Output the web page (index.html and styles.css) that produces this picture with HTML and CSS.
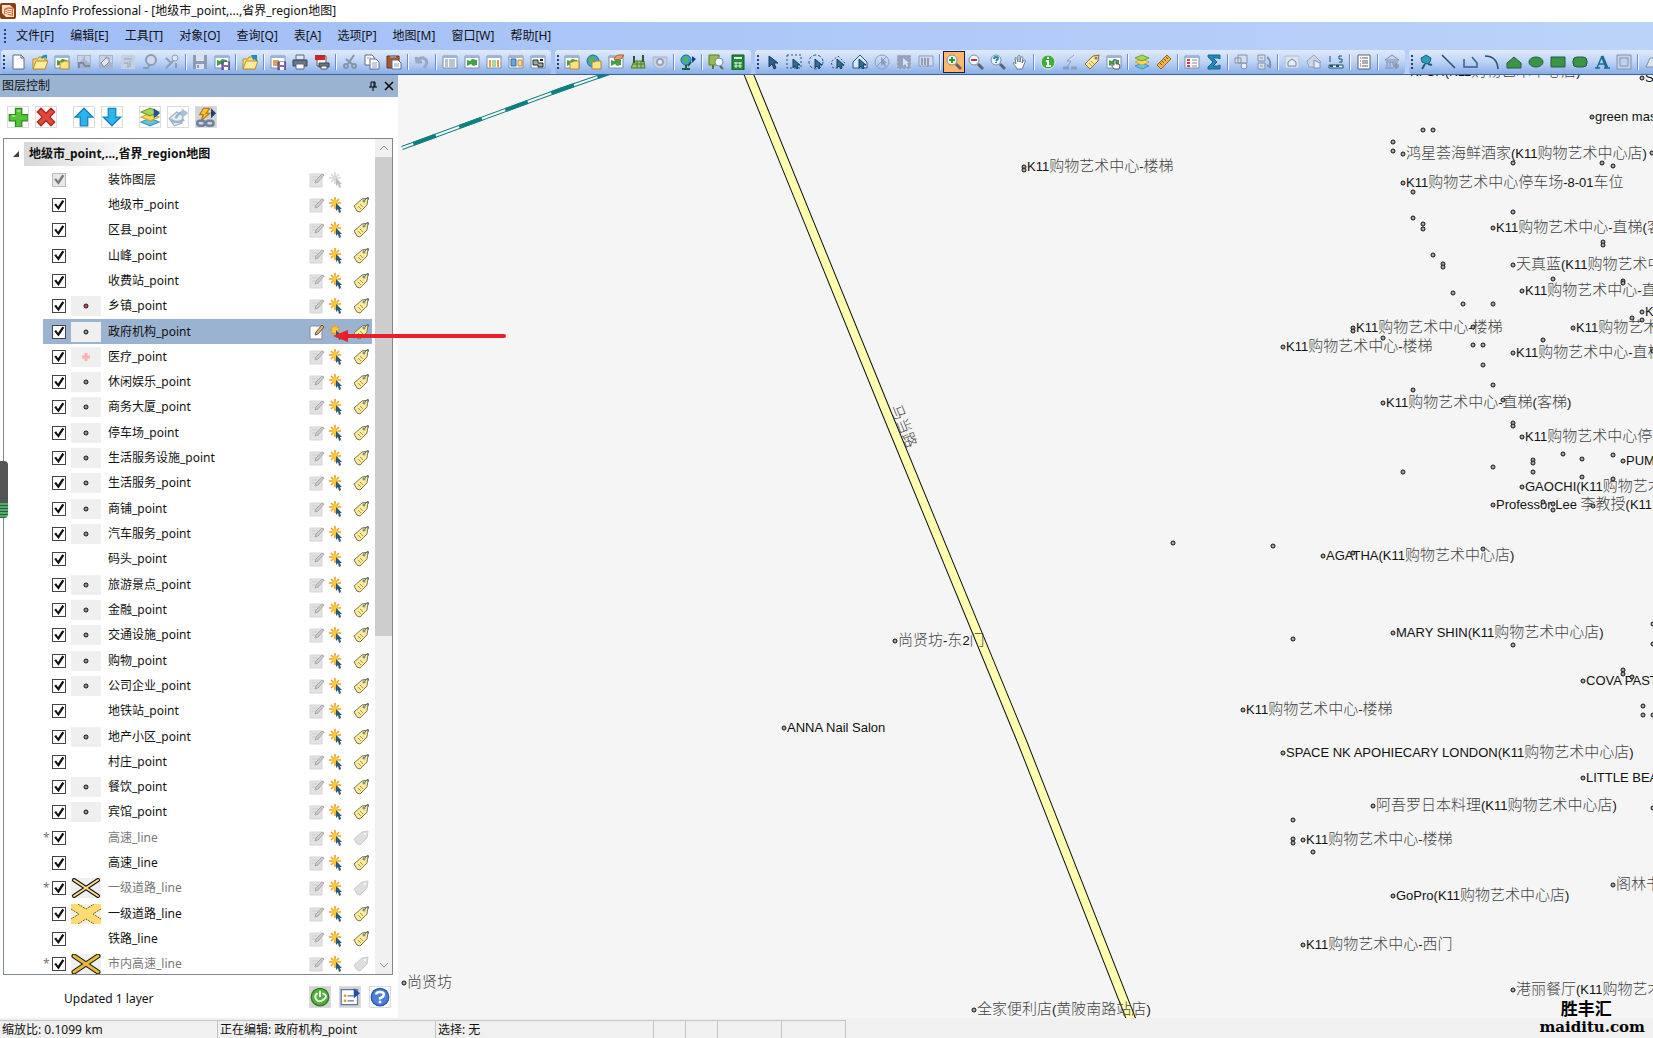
FILE: index.html
```html
<!DOCTYPE html>
<html lang="zh-CN">
<head>
  <meta charset="UTF-8">
  <title>MapInfo Professional</title>
  <link rel="stylesheet" href="styles.css">
</head>
<body>

  <header class="titlebar">
    <svg class="logo" viewBox="0 0 16 16">
      <rect x="0" y="0" width="16" height="16" rx="2" fill="#8a3f12"/>
      <path d="M2 2h8l4 4v8H6l-4-4z" fill="#fbe3cf"/>
      <path d="M4 11V6c3-2 6-2 9-1v8z" fill="#e0702a"/>
      <path d="M5 8q4-3 7-1M5 10q4-3 7-1M5 12q4-3 7-1" stroke="#fff" fill="none"/>
    </svg>
    <span>MapInfo Professional - [地级市_point,...,省界_region地图]</span>
  </header>

  <nav class="menubar">
    <button>文件[F]</button>
    <button>编辑[E]</button>
    <button>工具[T]</button>
    <button>对象[O]</button>
    <button>查询[Q]</button>
    <button>表[A]</button>
    <button>选项[P]</button>
    <button>地图[M]</button>
    <button>窗口[W]</button>
    <button>帮助[H]</button>
  </nav>

  <div class="toolbars" id="toolbars"></div>

  <main class="workspace">
    <section class="panel">
      <div class="panel-header">
        <h2>图层控制</h2>
        <button aria-label="固定"><svg viewBox="0 0 10 10"><path d="M3 1h4v5M3 1v5M1 6h8M5 6v4M6 1v5" stroke="#000" fill="none"/></svg></button>
        <button aria-label="关闭"><svg viewBox="0 0 10 10"><path d="M1 1l8 8M9 1l-8 8" stroke="#000" stroke-width="1.5" fill="none"/></svg></button>
      </div>

      <div class="panel-tools" id="panelTools"></div>

      <div class="tree">
        <div class="tree-body">
          <div class="tree-root">
            <svg viewBox="0 0 8 8"><path d="M7 1v6H1z" fill="#404040"/></svg>
            <strong>地级市_point,...,省界_region地图</strong>
          </div>
          <div class="layers" id="layers"></div>
        </div>
        <div class="scrollbar">
          <svg viewBox="0 0 10 10"><path d="M1 7l4-4 4 4" stroke="#888" fill="none"/></svg>
          <div class="track"><div class="thumb"></div></div>
          <svg viewBox="0 0 10 10"><path d="M1 3l4 4 4-4" stroke="#888" fill="none"/></svg>
        </div>
      </div>

      <div class="panel-footer">
        <span>Updated 1 layer</span>
        <div class="footer-tools" id="footerTools"></div>
      </div>
    </section>

    <section class="map">
      <svg class="map-canvas">
        <g transform="translate(-398 -75)">
          <polyline class="rail" points="402,148 560,90 612,72"/>
          <polyline class="rail-inner" points="402,148 560,90 612,72"/>
          <polyline class="rail-dash" points="402,148 560,90 612,72"/>
          <polyline class="road-edge" points="747,70 885,409 1023,744 1133,1024"/>
          <polyline class="road" points="747,70 885,409 1023,744 1133,1024"/>
          <g id="places"></g>
          <text class="label cjk" text-anchor="middle" transform="translate(899 428) rotate(68)">马当路</text>
        </g>
      </svg>
    </section>

    <svg class="arrow" viewBox="0 0 174 12"><path d="M12 6H171" stroke="#e8202c" stroke-width="4" stroke-linecap="round"/><path d="M0 6L15 0v12z" fill="#e8202c"/></svg>
    <div class="side-handle"></div>
  </main>

  <footer class="statusbar">
    <span class="wide">缩放比: 0.1099 km</span>
    <span class="wide">正在编辑: 政府机构_point</span>
    <span class="wide">选择: 无</span>
    <span></span>
    <span></span>
    <span class="mid"></span>
    <span class="mid"></span>
  </footer>

  <div class="watermark"><b>胜丰汇</b><strong>maiditu.com</strong></div>

  <script>
    // pieces that several icons share
    const folder = '<path d="M1 5h5l1-2h6v3h2l-2 9H1z" fill="#f8dc78" stroke="#b98f28"/><path d="M1 15l3-8h12l-3 8z" fill="#ffeb9c" stroke="#b98f28"/>';
    const miniFolder = '<path d="M6 8h3l1-1h5v8H6z" fill="#ffe182" stroke="#b08a2c"/>';
    const miniDisk = '<path d="M8 8h8v8H8z" fill="#8a6bb0" stroke="#59407c"/><path d="M10 8h4v3h-4zM10 13h4v3h-4z" fill="#fff"/>';
    const frame = '<path d="M1 2h14v12H1z" fill="#fff" stroke="#7c8ea5"/><path d="M1 3h14" stroke="#9cb4d0" stroke-width="2"/>';
    const land = '<path d="M3 6l3 1 2-2 5 1v5l-4 1-2-2-4 2z" fill="#43a047"/>';
    const grayFrame = '<path d="M1 1h14v14H1z" fill="#a7b3ca"/><path d="M2 2h6l-2 4-4 3zM9 2h5v7l-5-3z" fill="#c9d2e3"/>';
    const cursor = '<path d="M5 2v11l3-3 2 5 2-1-2-5h4z" fill="#2d5f8c" stroke="#17405f"/>';
    const smallCursor = '<path d="M7 5v9l2-2 2 3 1-1-1-3h3z" fill="#2d6f96" stroke="#17405f"/>';
    const lens = '<path d="M10 10l5 5" stroke="#5a6470" stroke-width="3"/><circle cx="6" cy="6" r="5" fill="#eef7ff" stroke="#7d8da0"/>';
    const blueFlag = '<path d="M11 1l5 4-5 4z" fill="#1f4fa5"/>';
    const hand = '<path d="M5 15c-1-3-3-4-4-6 1-1 2 0 3 1L3 4c1-1 2 0 2 1l1 3V2c1-1 2-1 2 0v6l1-5c1-1 2 0 2 1l-1 5 2-3c1 0 2 0 1 2l-2 5-1 2z" fill="#fff" stroke="#6c7a8c"/>';
    const layersShape = '<path d="M1 12l7-3 7 3-7 3z" fill="#62c3e8" stroke="#3998c2"/><path d="M1 8l7-3 7 3-7 3z" fill="#ffd75c" stroke="#d9a52a"/><path d="M1 4l7-3 7 3-7 3z" fill="#a6d65a" stroke="#6da52c"/>';
    const star = '<path d="M6 0v12M0 6h12M2 2l8 8M10 2l-8 8" stroke="#e9a01d" stroke-width="1.6"/><circle cx="6" cy="6" r="3" fill="#ffc83a"/>';
    const starCursor = '<path d="M7 6v8l2-2 1 4 2-1-1-3h2z" fill="#2c5877"/>';

    const icons = {
      blank: '<path d="M3 1h8l3 3v11H3z" fill="#fff" stroke="#5d6d86"/><path d="M11 1v3h3" fill="none" stroke="#5d6d86"/>',
      open: folder + '<path d="M9 4q2-4 6-3v4l-2-2-3 2z" fill="#2588c6"/>',
      openMap: frame + land + miniFolder,
      gray1: grayFrame + '<path d="M3 14V9h4l2 3h5" stroke="#7d8aa5" fill="none" stroke-width="2"/>',
      gray2: grayFrame + '<path d="M3 9l5-5h3v4l-5 5z" fill="#e1e6ef" stroke="#7d8aa5"/>',
      gray3: '<path d="M1 1h14v14H1z" fill="#c4cfe0"/><path d="M4 5h8M4 9h4v5M10 7v6" stroke="#94a1ba" fill="none"/>',
      gray4: '<circle cx="9" cy="6" r="5" fill="#cfd9ea" stroke="#8d9bb5" stroke-width="2"/><path d="M1 14h5l2-4" stroke="#8d9bb5" stroke-width="2" fill="none"/>',
      gray5: '<path d="M2 14L9 7M2 4l4 4M12 9v5" stroke="#8d9bb5" stroke-width="2" fill="none"/><circle cx="11" cy="4" r="3" fill="#dde5f2" stroke="#8d9bb5"/>',
      saveGray: '<path d="M1 1h14v14H1z" fill="#8e9bb4"/><path d="M4 1h8v6H4zM4 10h8v5H4z" fill="#dce3ee"/><path d="M6 11v3" stroke="#8e9bb4" stroke-width="2"/>',
      saveMap: frame + land + miniDisk,
      folderFlag: folder + '<path d="M9 1h6v7l-2-3-2 1z" fill="#2588c6"/>',
      savePic: frame + '<path d="M3 6h6v6H3z" fill="#d9a35b"/>' + miniDisk,
      print: '<path d="M4 1h8v5H4z" fill="#dceaf8" stroke="#59697d"/><path d="M1 6h14v6H1z" fill="#667587" stroke="#38444f"/><path d="M4 10h8v5H4z" fill="#fff" stroke="#59697d"/>',
      pdf: '<path d="M3 2h9v10H3z" fill="#fff" stroke="#7f4f4f"/><path d="M1 1h10v5H1z" fill="#c62828"/><path d="M5 9h10v4H5z" fill="#667587" stroke="#38444f"/><path d="M7 12h6v3H7z" fill="#fff" stroke="#555"/>',
      cut: '<path d="M12 1L6 10M4 5l7 6" stroke="#8693ac" stroke-width="2"/><circle cx="4" cy="12" r="2" fill="none" stroke="#8693ac" stroke-width="2"/><circle cx="12" cy="12" r="2" fill="none" stroke="#8693ac" stroke-width="2"/>',
      copy: '<path d="M1 1h7l2 2v8H1z" fill="#fff" stroke="#5d6d86"/><path d="M6 5h6l3 3v7H6z" fill="#fff" stroke="#5d6d86"/><path d="M8 9h5M8 11h5M8 13h5M3 4h4" stroke="#8a9cb5"/>',
      paste: '<path d="M1 2h12v12H1z" fill="#a8572f" stroke="#6d3215"/><path d="M4 1h6v3H4z" fill="#8a8f98"/><path d="M6 6h6l3 3v6H6z" fill="#fff" stroke="#5d6d86"/><path d="M8 10h5M8 12h5" stroke="#8a9cb5"/>',
      undo: '<path d="M2 3l1 5h5M3 7q4-5 8-2t-1 9" stroke="#9aa7bf" stroke-width="3" fill="none"/>',
      table: frame + '<path d="M3 6h3M3 8h3M3 10h3M3 12h3M7 6h6M7 8h6M7 10h6M7 12h6" stroke="#7787a0"/>',
      mapWin: frame + land,
      graphWin: frame + '<path d="M4 6v7M12 6v7" stroke="#e89d34" stroke-width="2"/><path d="M7 6v7M9 6v7" stroke="#58a856"/>',
      layoutWin: frame + '<path d="M3 5h5v7H3z" fill="#61a8e0" stroke="#2e69a8"/><path d="M10 6h4v6h-4z" fill="#ffd9a0" stroke="#cf852b"/>',
      redistrict: frame + '<path d="M3 6h5v3h5v4H8v-2H3z" fill="#9fae9f" stroke="#222"/><path d="M10 6h3" stroke="#222" stroke-width="2"/>',
      wfs: frame + land + miniFolder,
      wms: '<circle cx="7" cy="7" r="6" fill="#3f9fd3" stroke="#256a97"/><path d="M3 4q4-3 6 0l-2 4-4 1zM9 8l3-1-1 4z" fill="#5bb443"/>' + miniFolder,
      tile: frame + land + '<path d="M6 4l4-3h6l-3 4-6 1z" fill="#e8a06b" stroke="#a9602c"/>',
      grid: '<path d="M1 14l3-7h10l1 7zM3 10h12M7 7v7M11 7v7" fill="#9ac46e" stroke="#4c7d2c"/><path d="M4 2v7M13 1v7" stroke="#2d5a2d" stroke-width="2"/>',
      shieldGray: '<path d="M1 3h14v5q0 5-7 7-7-2-7-7z" fill="#c9cfe0" stroke="#aab3c8"/><circle cx="8" cy="8" r="3" fill="#eef" stroke="#98a4bd" stroke-width="2"/>',
      globe: '<circle cx="6" cy="6" r="5" fill="#3aa7c9" stroke="#1e6c8c"/><path d="M3 4l4-1 1 4-4 2z" fill="#5bb443"/><path d="M6 11v4M2 15h8M11 8l-3 4" stroke="#1d5c46" stroke-width="2"/><path d="M12 2l4 3-4 4z" fill="#123f94"/>',
      findMap: '<path d="M1 1h10v10H1z" fill="#95ba51" stroke="#5b7b28"/><path d="M5 11v4" stroke="#5b7b28" stroke-width="2"/><path d="M12 12l3 3" stroke="#5a6470" stroke-width="2"/><circle cx="11" cy="8" r="4" fill="#eef7ff" stroke="#7d8da0"/>',
      calc: '<path d="M2 1h12v15H2z" fill="#238a3b" stroke="#0d5a20"/><path d="M4 4h8" stroke="#dff5df" stroke-width="2"/><path d="M6 8v6M10 8v6M4 9h8M4 12h8" stroke="#dff5df"/>',
      pointer: cursor,
      selRect: '<path d="M1 1h14v13H1z" fill="none" stroke="#2e5380" stroke-dasharray="2 2"/>' + smallCursor,
      selRadius: '<circle cx="8" cy="8" r="7" fill="none" stroke="#2e5380" stroke-dasharray="3 2"/>' + smallCursor,
      selPoly: '<path d="M8 2l7 7-3 5H3L1 8z" fill="none" stroke="#2e5380" stroke-dasharray="2 2"/>' + smallCursor,
      selBound: '<path d="M8 1l7 7v6H1V8z" fill="#d9e8fa" stroke="#2e5380"/>' + smallCursor,
      unselGray: '<circle cx="8" cy="8" r="7" fill="none" stroke="#8f9dbb"/><path d="M7 3v9l2-2 2 3 1-1-1-3h2z" fill="#8f9dbb"/><path d="M3 12L12 3" stroke="#8f9dbb"/>',
      invertGray: '<path d="M1 1h14v14H1z" fill="#95a2bd" stroke="#c7d2e6" stroke-dasharray="2 2"/><path d="M7 4v8l2-2 2 3 1-1-1-3h2z" fill="#dbe4f3"/>',
      graphGray: '<path d="M1 2h14v10H1z" fill="#d2dbea" stroke="#8f9dbb"/><path d="M4 4v7M7 4v7M10 4v9" stroke="#8f9dbb" stroke-width="2"/>',
      zoomIn: lens + '<path d="M6 3v6M3 6h6" stroke="#2c9a2c" stroke-width="2"/>',
      zoomOut: lens + '<path d="M3 6h6" stroke="#c0392b" stroke-width="2"/>',
      zoomAny: lens + '<path d="M4 5q0-2 2-2t2 1-2 3M6 8v1" stroke="#2183a8" stroke-width="2" fill="none"/>',
      hand: hand,
      info: '<circle cx="8" cy="8" r="7" fill="#3fae3f" stroke="#dff1df"/><path d="M8 3v2M6 7h2v5M6 12h5" stroke="#fff" stroke-width="2" fill="none"/>',
      hotlink: '<path d="M1 14h6M9 14h6" stroke="#8f9dbb" stroke-width="3"/><path d="M12 1L5 7h4l-4 6" stroke="#8f9dbb" fill="#dbe4f3"/>',
      label: '<path d="M1 10L9 2l6-1-1 6-8 8z" fill="#f7e7a0" stroke="#8a6d1f"/><circle cx="12" cy="4" r="1" fill="#fff" stroke="#555"/><path d="M5 9l3 3M7 7l3 3" stroke="#b79a45"/>',
      drag: frame + land + '<path d="M8 15c-1-2-3-3-2-4h2V6h2v4l3 0 1 2-1 3z" fill="#fff" stroke="#556"/>',
      layers: layersShape,
      ruler: '<path d="M1 11L11 1l4 4L5 15z" fill="#f1b64a" stroke="#9a6417"/><path d="M4 9l2 2M6 7l2 2M8 5l2 2M10 3l2 2" stroke="#7a4c0c"/>',
      legend: frame + '<path d="M3 6h3M3 9h3M3 12h3" stroke="#cf3f3f" stroke-width="2"/><path d="M8 6h5M8 9h5M8 12h5" stroke="#889"/>',
      sum: '<path d="M2 1h12v4l-2-1H7l4 4-4 4h5l2-1v4H2v-2l5-5-5-5z" fill="#2288b8" stroke="#17658c"/>',
      district1: '<path d="M4 1h9v8H4zM1 4h6v5H1z" fill="#d5deed" stroke="#8290ac"/><circle cx="10" cy="12" r="3" fill="#e6ecf6" stroke="#8290ac"/>',
      district2: '<path d="M2 1h7v6H2zM2 9h7v6H2zM4 4h3M4 12h3" fill="#d5deed" stroke="#8290ac"/><path d="M11 3q4 3 3 10l-3-2" fill="none" stroke="#8290ac" stroke-width="2"/>',
      clip1: '<path d="M1 2h14v12H1z" fill="#dbe3f0" stroke="#b5c0d5"/><path d="M4 12V8l4-3 4 3v4z" fill="#e8eef7" stroke="#7281a0"/>',
      clip2: '<path d="M1 7l7-6 7 7-7 5H3z" fill="#ccd6e7" stroke="#96a3bc"/><path d="M8 6v8h6V9z" fill="#e8eef7" stroke="#8290ac"/>',
      scale: '<path d="M1 11h14v3H1z" fill="#fff" stroke="#174f6d"/><path d="M2 12h3M8 12h3" stroke="#174f6d" stroke-width="2"/><path d="M2 2v6M14 2h-3v3h3v3h-3" stroke="#17506c" fill="none"/>',
      report: '<path d="M2 1h12v14H2z" fill="#fff" stroke="#55606e"/><path d="M6 4h6M6 7h6M6 9h6M6 12h6" stroke="#55606e"/><path d="M4 4h1M4 7h1M4 10h1M4 12h1" stroke="#c33"/>',
      bank: '<path d="M1 6l7-5 7 5z" fill="#c9d3e4" stroke="#7d8ca8"/><path d="M3 8v5M6 8v5M9 8v3M1 14h8M2 8h12" stroke="#7d8ca8"/><path d="M9 12h6M12 9v6" stroke="#8b99b3" stroke-width="3"/>',
      pin: '<path d="M8 1l5 3-1 4-3 2-5-2-1-4 2-1z" fill="#2e9dba" stroke="#155f78"/><path d="M7 10l-3 5M10 10l4 1" stroke="#155f78" stroke-width="2"/>',
      line: '<path d="M2 1l13 13" stroke="#234f73" stroke-width="1.5"/>',
      pline: '<path d="M2 5v8h13V9L10 3" stroke="#31608a" fill="none" stroke-width="1.5"/>',
      arc: '<path d="M1 2q12 0 13 13" stroke="#234f73" fill="none" stroke-width="1.5"/>',
      poly: '<path d="M1 9l7-6 7 6v5H1z" fill="#3d9442" stroke="#1e5a52"/>',
      ellipse: '<ellipse cx="8" cy="8" rx="7" ry="5" fill="#3d9442" stroke="#1e5a52"/>',
      rect: '<path d="M1 3h14v10H1z" fill="#3d9442" stroke="#1e5a52"/>',
      roundRect: '<rect x="1" y="3" width="14" height="10" rx="4" fill="#3d9442" stroke="#1e5a52"/>',
      text: '<path d="M1 14h5M10 14h6M5 10h6" stroke="#196d93" stroke-width="1.5"/><path d="M3 14L8 2" stroke="#196d93" stroke-width="1.5"/><path d="M8 2l5 12" stroke="#196d93" stroke-width="3"/>',
      frameGray: '<path d="M1 1h14v14H1zM4 4h8v8H4z" fill="#c3d2ec" stroke="#8290ac"/>',
      reshape: '<path d="M2 13l4-9h6l3 9z" fill="#dbe4f2" stroke="#8290ac"/>',
      add: '<path d="M6 1h5v5h5v5h-5v5H6v-5H1V6h5z" fill="#55c23a" stroke="#2c8a1c"/><path d="M7 3h3M3 7h3" stroke="#b6efa0"/>',
      remove: '<path d="M4 1l4 4 4-4 3 3-4 4 4 4-3 3-4-4-4 4-3-3 4-4-4-4z" fill="#e3473c" stroke="#a92920"/>',
      up: '<path d="M8 1l7 7h-4v7H5V8H1z" fill="#2bb4ef" stroke="#1580b8"/>',
      down: '<path d="M8 15l7-7h-4V1H5v7H1z" fill="#2bb4ef" stroke="#1580b8"/>',
      layersMenu: layersShape + blueFlag,
      labelMenu: '<path d="M1 9l6-5 5 3-1 6-6 2z" fill="#e6edf4" stroke="#9cb3cc"/><path d="M2 10q5 4 11 0M6 9q4-7 9-4" stroke="#9cb3cc" stroke-width="2" fill="none"/><path d="M11 1l5 4-5 4z" fill="#a9c0dc"/>',
      hotMenu: '<path d="M6 1h5L8 5h3l-7 6 2-5H3z" fill="#ffc531" stroke="#b67b12"/><rect x="1" y="11" width="6" height="4" rx="2" fill="none" stroke="#6d829f" stroke-width="2"/><rect x="8" y="11" width="6" height="4" rx="2" fill="none" stroke="#6d829f" stroke-width="2"/><path d="M12 1l4 4-4 4z" fill="#1f3f75"/>',
      power: '<circle cx="8" cy="8" r="7" fill="#4db437" stroke="#2b7d1c"/><path d="M8 3v5M6 5q-3 2-1 5t6 0-1-5" stroke="#fff" stroke-width="1.5" fill="none"/>',
      options: '<path d="M1 2h13v12H1z" fill="#fff" stroke="#5878a5"/><path d="M3 7h2M3 11h2" stroke="#e0a030" stroke-width="2"/><path d="M6 7h5M6 11h5" stroke="#68788c"/>' + blueFlag,
      help: '<circle cx="8" cy="8" r="7" fill="#4c7fd8" stroke="#2a55a5"/><path d="M5 6q0-2 3-2t3 2-3 3v1M8 11v2" stroke="#fff" stroke-width="2" fill="none"/>',
      edit: '<path d="M1 2h12v13H1z" fill="#fff" stroke="#889"/><path d="M6 11l1-3 6-7 2 2-6 7z" fill="#eeb250" stroke="#555"/>',
      editOff: '<path d="M1 2h12v13H1z" fill="#e2e2e2" stroke="#d4d4d4"/><path d="M3 5h6M3 8h4" stroke="#ccc"/><path d="M6 11l1-3 6-6 2 1-6 7z" fill="#ccc" stroke="#aaa"/>',
      select: star + starCursor,
      selectOff: '<path d="M6 0v12M0 6h12M2 2l8 8M10 2l-8 8" stroke="#d8d8d8" stroke-width="1.6"/><path d="M7 6v8l2-2 1 4 2-1-1-3h2z" fill="#bbb"/>',
      tag: '<path d="M1 9l8-7 6-1-1 7-7 7-3-1z" fill="#f8eb9b" stroke="#84744a"/><circle cx="11" cy="4" r="1" fill="#fff" stroke="#47698a"/><path d="M12 3l3-3 1 3" fill="none" stroke="#47799a"/><path d="M5 9l3 3M7 7l3 3" stroke="#a8944c"/>',
      tagOff: '<path d="M1 9l8-7 6-1-1 7-7 7-3-1z" fill="#dedede" stroke="#ccc"/><circle cx="12" cy="4" r="1" fill="#fff"/>'
    };

    function icon(name) {
      return `<svg class="icon" viewBox="0 0 16 16">${icons[name]}</svg>`;
    }

    function buttons(names) {
      return names.split(' ').map(n => n === '|'
        ? '<i class="sep"></i>'
        : `<button class="tool tool-${n}" aria-label="${n}">${icon(n)}</button>`).join('');
    }

    const bars = [
      'blank open openMap gray1 gray2 gray3 gray4 gray5 | saveGray saveMap | folderFlag | savePic print pdf | cut copy paste | undo | table mapWin graphWin layoutWin redistrict',
      'wfs wms tile grid shieldGray | globe | findMap calc',
      'pointer selRect selRadius selPoly selBound unselGray invertGray graphGray | zoomIn zoomOut zoomAny hand | info hotlink label drag | layers ruler | legend sum | district1 district2 | clip1 clip2 scale | report | bank',
      'pin line pline arc poly ellipse rect roundRect text frameGray | reshape'
    ];
    document.getElementById('toolbars').innerHTML =
      bars.map(b => `<div class="toolbar"><i class="grip"></i>${buttons(b)}</div>`).join('');

    document.getElementById('panelTools').innerHTML =
      ['add remove', 'up down', 'layersMenu labelMenu hotMenu'].map(g => `<div class="group">${buttons(g)}</div>`).join('');
    document.getElementById('footerTools').innerHTML = buttons('power options help');

    // name, symbol, flags: d = disabled, s = selected, * = out of zoom range
    const layers = [
      ['装饰图层', '', 'd'], ['地级市_point'], ['区县_point'], ['山峰_point'], ['收费站_point'],
      ['乡镇_point', 'red'], ['政府机构_point', 'dot', 's'], ['医疗_point', 'cross'],
      ['休闲娱乐_point', 'dot'], ['商务大厦_point', 'dot'], ['停车场_point', 'dot'],
      ['生活服务设施_point', 'dot'], ['生活服务_point', 'dot'], ['商铺_point', 'dot'],
      ['汽车服务_point', 'dot'], ['码头_point'], ['旅游景点_point', 'dot'], ['金融_point', 'dot'],
      ['交通设施_point', 'dot'], ['购物_point', 'dot'], ['公司企业_point', 'dot'], ['地铁站_point'],
      ['地产小区_point', 'dot'], ['村庄_point'], ['餐饮_point', 'dot'], ['宾馆_point', 'dot'],
      ['高速_line', '', '*'], ['高速_line'], ['一级道路_line', 'thin', '*'],
      ['一级道路_line', 'thick'], ['铁路_line'], ['市内高速_line', 'gold', '*']
    ];

    const cross = (w, c) => `<path d="M3 2L27 18M27 2L3 18" stroke="#111" stroke-width="${w + 2}" stroke-linecap="round"/><path d="M3 2L27 18M27 2L3 18" stroke="${c}" stroke-width="${w}" stroke-linecap="round"/>`;
    const symbols = {
      dot: '<circle cx="15" cy="10" r="2" fill="#999" stroke="#111"/>',
      red: '<circle cx="15" cy="10" r="2" fill="#b55" stroke="#311"/>',
      cross: '<path d="M15 6v8M11 10h8" stroke="#ffb0b0" stroke-width="3"/>',
      thin: cross(2, '#ffe08a'),
      thick: '<path d="M0 0h30v20H0z" fill="#ffdc73"/><path d="M7 0l8 5 8-5zM7 20l8-5 8 5zM0 5l8 5-8 5zM30 5l-8 5 8 5z" fill="#f4f0e4"/><path d="M7 0l8 5 8-5M7 20l8-5 8 5M0 5l8 5-8 5M30 5l-8 5 8 5" fill="none" stroke="#6b5a18" stroke-dasharray="2 1"/>',
      gold: cross(3, '#e8b93a')
    };

    document.getElementById('layers').innerHTML = layers.map(([name, symbol, flag], i) => `
      <div class="layer ${flag === 's' ? 'selected' : ''} ${flag === '*' ? 'hidden-zoom' : ''}">
        <span class="mark">${flag === '*' ? '*' : ''}</span>
        <input type="checkbox" id="layer${i}" checked ${flag === 'd' ? 'disabled' : ''}>
        ${symbol ? `<svg class="symbol" viewBox="0 0 30 20">${symbols[symbol]}</svg>` : '<span></span>'}
        <label for="layer${i}">${name}</label>
        ${icon(flag === 's' ? 'edit' : 'editOff')}
        ${icon(flag === 'd' ? 'selectOff' : 'select')}
        ${flag === 'd' ? '' : icon(flag === '*' ? 'tagOff' : 'tag')}
      </div>`).join('');

    // labelled places: x, y, text
    const k11 = 'K11购物艺术中心';
    const places = [
      [1024, 167, k11 + '-楼梯'], [895, 641, '尚贤坊-东2门'], [784, 728, 'ANNA Nail Salon'],
      [404, 983, '尚贤坊'], [974, 1010, '全家便利店(黄陂南路站店)'],
      [1407, 72, `KFSH(${k11}店)`], [1642, 78, 'S'], [1592, 117, 'green massage'],
      [1403, 154, `鸿星荟海鲜酒家(${k11}店)`], [1403, 183, k11 + '停车场-8-01车位'],
      [1493, 228, k11 + '-直梯(客梯)'], [1513, 265, `天真蓝(${k11}店)`], [1522, 291, k11 + '-直梯'],
      [1642, 312, k11], [1353, 328, k11 + '-楼梯'], [1573, 328, k11], [1513, 353, k11 + '-直梯'],
      [1283, 347, k11 + '-楼梯'], [1383, 403, k11 + '-直梯(客梯)'], [1522, 437, k11 + '停车场'],
      [1623, 461, 'PUMA'], [1522, 487, `GAOCHI(${k11}店)`], [1493, 505, `Professor Lee 李教授(${k11}店)`],
      [1323, 556, `AGATHA(${k11}店)`], [1393, 633, `MARY SHIN(${k11}店)`], [1583, 681, 'COVA PASTICCERIA'],
      [1243, 710, k11 + '-楼梯'], [1283, 753, `SPACE NK APOHIECARY LONDON(${k11}店)`],
      [1583, 778, 'LITTLE BEAN'], [1373, 806, `阿吾罗日本料理(${k11}店)`], [1303, 840, k11 + '-楼梯'],
      [1613, 885, '阁林书店'], [1393, 896, `GoPro(${k11}店)`], [1303, 945, k11 + '-西门'],
      [1513, 990, `港丽餐厅(${k11}店)`]
    ];

    // points without a label
    const dots = [
      [1024, 170], [1173, 543], [1423, 130], [1433, 130], [1393, 142], [1393, 151], [1513, 163],
      [1602, 163], [1613, 166], [1652, 153], [1413, 192], [1513, 212], [1413, 218], [1423, 224],
      [1423, 229], [1603, 242], [1603, 245], [1433, 255], [1443, 264], [1443, 267], [1553, 279],
      [1623, 281], [1623, 283], [1453, 293], [1463, 304], [1493, 304], [1632, 318], [1642, 320],
      [1353, 331], [1473, 327], [1383, 338], [1543, 340], [1473, 345], [1483, 345], [1653, 351],
      [1483, 365], [1413, 390], [1493, 385], [1503, 400], [1513, 423], [1513, 426], [1563, 454],
      [1582, 459], [1613, 455], [1533, 460], [1533, 463], [1493, 467], [1403, 472], [1533, 472],
      [1582, 477], [1613, 479], [1543, 502], [1553, 504], [1553, 510], [1593, 506], [1273, 546],
      [1353, 553], [1483, 549], [1293, 639], [1513, 645], [1653, 624], [1653, 644], [1623, 670],
      [1623, 674], [1632, 677], [1643, 706], [1643, 715], [1653, 715], [1653, 808], [1293, 820],
      [1293, 839], [1293, 843], [1313, 852]
    ];

    const dot = (x, y) => `<circle class="dot" cx="${x}" cy="${y}" r="2"/>`;
    // Chinese runs are set a little larger than the Latin ones
    const runs = text => text.replace(/[\u4e00-\u9fff]+/g, '<tspan class="cjk">$&</tspan>');

    document.getElementById('places').innerHTML =
      places.map(([x, y, text]) => dot(x, y) + `<text class="label" x="${x + 3}" y="${y + 4}">${runs(text)}</text>`).join('') +
      dots.map(([x, y]) => dot(x, y)).join('');
  </script>

</body>
</html>
```
FILE: styles.css
```css
* {
  box-sizing: border-box;
}

body {
  margin: 0;
  height: 100vh;
  display: flex;
  flex-direction: column;
  position: relative;
  overflow: hidden;
  background: #f0f0f0;
  color: #111;
  font-family: "Noto Sans", "Noto Sans CJK SC", sans-serif;
  font-size: 12px;
  line-height: 16px;
}

button {
  font: inherit;
  color: inherit;
  border: none;
  background: none;
  padding: 0;
}

svg {
  display: block;
}

.icon {
  width: 16px;
  height: 16px;
}

/* title and menu */
.titlebar {
  height: 22px;
  display: flex;
  align-items: center;
  gap: 5px;
  background: #fff;
}

.logo {
  width: 16px;
  height: 16px;
}

.menubar {
  height: 28px;
  display: flex;
  align-items: center;
  padding: 0 8px;
  background: linear-gradient(to right, #a0bdf6, #bcd3f9);
  position: relative;
}

.menubar::before,
.grip::before {
  content: "";
  width: 2px;
  height: 14px;
  background: repeating-linear-gradient(#27406e 0 2px, transparent 2px 4px);
}

.menubar::before {
  position: absolute;
  left: 4px;
}

.menubar button {
  padding: 0 8px;
}

.toolbars {
  display: flex;
  gap: 4px;
  height: 25px;
  padding-left: 1px;
  background: linear-gradient(to right, #a0bdf6, #bcd3f9);
  border-bottom: 1px solid #3b619c;
  overflow: hidden;
}

.toolbar {
  flex: none;
  display: flex;
  align-items: center;
  padding-right: 2px;
  border-radius: 3px;
  background: linear-gradient(#e0eafc, #bdd3f6 50%, #88ade6);
}

.toolbar:last-child {
  flex: 1 0 auto;
}

.grip {
  width: 6px;
  display: flex;
  justify-content: center;
}

.tool {
  width: 22px;
  height: 22px;
  display: flex;
  align-items: center;
  justify-content: center;
}

.tool-zoomIn {
  background: #fdb869;
  border: 1px solid #1b1b60;
}

.sep {
  width: 6px;
  height: 16px;
  border-left: 2px solid transparent;
  background: linear-gradient(to right, #6a8cc8 1px, #f4f8ff 1px 2px, transparent 2px);
}

/* layer panel */
.workspace {
  flex: 1;
  min-height: 0;
  display: flex;
  position: relative;
}

.panel {
  flex: none;
  width: 398px;
  display: flex;
  flex-direction: column;
  background: #fff;
}

.panel-header {
  height: 22px;
  display: flex;
  align-items: center;
  gap: 6px;
  padding: 0 4px 0 2px;
  background: #9ab3d1;
}

.panel-header h2 {
  flex: 1;
  margin: 0;
  font-size: 12px;
  font-weight: normal;
}

.panel-header svg {
  width: 10px;
  height: 10px;
}

.panel-tools {
  display: flex;
  gap: 16px;
  padding: 9px 7px 10px;
}

.group,
.footer-tools {
  display: flex;
  gap: 6px;
}

.footer-tools {
  gap: 8px;
}

.panel .tool {
  border: 1px solid #dcdcdc;
}

.panel .tool .icon {
  width: 20px;
  height: 20px;
}

.panel .tool-hotMenu,
.panel .tool-power,
.panel .tool-options {
  background: #d4d4d4;
}

.tree {
  flex: 1;
  min-height: 0;
  display: flex;
  margin: 0 5px 0 3px;
  border: 1px solid #828790;
  overflow: hidden;
}

.tree-body {
  flex: 1;
  display: flex;
  flex-direction: column;
}

.tree-root {
  height: 28px;
  display: flex;
  align-items: center;
  gap: 3px;
  padding: 2px 0 0 7px;
}

.tree-root svg {
  width: 10px;
  height: 8px;
}

.tree-root strong {
  flex: 1;
  padding: 4px 5px;
  background: linear-gradient(to right, #d8d8d8, #fff 120px);
}

.layers {
  flex: 1;
  display: flex;
  flex-direction: column;
  margin: 0 3px -3px 39px;
}

.layer {
  flex: 1;
  display: grid;
  grid-template-columns: 9px 14px 35px 1fr 20px 24px 16px;
  align-items: center;
  padding-right: 3px;
}

.layer.selected {
  background: #9ab3d1;
}

.layer label {
  padding-left: 7px;
}

.layer .symbol {
  justify-self: end;
  width: 30px;
  height: 20px;
  background: #efefef;
}

.hidden-zoom {
  color: #777;
}

.layer input {
  appearance: none;
  width: 14px;
  height: 14px;
  margin: 0;
  display: flex;
  border: 1px solid #444;
  background: #fff;
}

.layer input::before {
  content: "";
  flex: 1;
  background: #111;
  clip-path: polygon(10% 48%, 26% 38%, 42% 62%, 78% 8%, 94% 18%, 46% 92%);
}

.layer input:disabled {
  border-color: #bbb;
  background: #e8e8e8;
}

.layer input:disabled::before {
  background: #777;
}

.scrollbar {
  width: 17px;
  display: flex;
  flex-direction: column;
  align-items: center;
  background: #f0f0f0;
}

.scrollbar svg {
  width: 10px;
  height: 10px;
  margin: 4px 0;
}

.track {
  flex: 1;
  width: 100%;
}

.thumb {
  height: 60%;
  background: #cdcdcd;
}

.panel-footer {
  display: flex;
  align-items: center;
  justify-content: space-between;
  height: 43px;
  padding: 0 7px 0 64px;
}

.panel-footer span {
  padding-top: 4px;
}

/* map */
.map {
  flex: 1;
  min-width: 0;
  background: #f5f5f5;
}

.map-canvas {
  width: 100%;
  height: 100%;
  overflow: hidden;
}

.map-canvas polyline {
  fill: none;
}

.road-edge {
  stroke: #111;
  stroke-width: 10;
}

.road {
  stroke: #ffffb0;
  stroke-width: 8;
}

.rail {
  stroke: #0f8080;
  stroke-width: 4;
}

.rail-inner {
  stroke: #f5f5f5;
  stroke-width: 2;
}

.rail-dash {
  stroke: #0f8080;
  stroke-width: 4;
  stroke-dasharray: 24 25;
  stroke-dashoffset: -12;
}

.label {
  font-family: "Liberation Sans", "Noto Sans CJK SC", sans-serif;
  font-size: 13px;
  fill: #111;
}

.cjk {
  font-size: 15px;
  font-weight: 300;
  fill: #444;
}

.dot {
  fill: #aaa;
  stroke: #111;
  stroke-width: 1;
}

.arrow {
  position: absolute;
  left: 333px;
  top: 255px;
  width: 174px;
  height: 12px;
}

.side-handle {
  position: absolute;
  left: 0;
  top: 386px;
  width: 8px;
  height: 57px;
  border-radius: 0 4px 4px 0;
  background: linear-gradient(#555 42px, transparent 42px), repeating-linear-gradient(#4fae6a 0 2px, #2f5c3c 2px 3px);
}

/* status bar */
.statusbar {
  height: 20px;
  display: flex;
  padding-top: 2px;
}

.statusbar span {
  width: 32px;
  padding: 1px 2px;
  border-top: 1px solid #c4c4c4;
  border-right: 1px solid #c4c4c4;
}

.statusbar .wide {
  width: 218px;
}

.statusbar .mid {
  width: 64px;
}

.watermark {
  position: absolute;
  right: 8px;
  bottom: 2px;
  display: flex;
  flex-direction: column;
  align-items: center;
  color: #000;
  font-size: 17px;
  line-height: 18px;
}

.watermark b {
  padding-right: 12px;
}

.watermark strong {
  font-family: "DejaVu Serif", serif;
  font-size: 15px;
  font-weight: 900;
}
```
